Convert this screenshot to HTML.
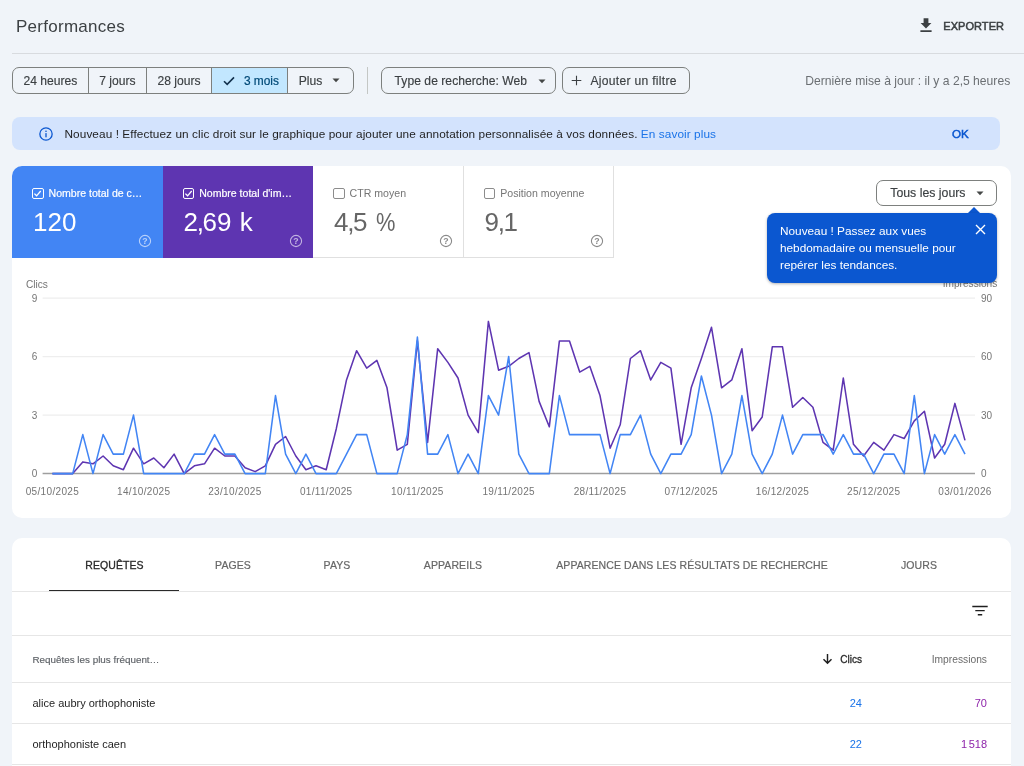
<!DOCTYPE html>
<html lang="fr"><head><meta charset="utf-8"><title>Performances</title>
<style>
*{box-sizing:border-box;margin:0;padding:0}
html,body{width:1024px;height:766px;overflow:hidden;background:#f0f4f9;font-family:"Liberation Sans",Arial,sans-serif;color:#1f1f1f}
.abs{position:absolute}
#title{left:16px;top:16.1px;font-size:17px;line-height:22px;color:#3c4043;letter-spacing:0.27px}
#export{left:943.3px;top:18px;font-size:11px;line-height:16px;color:#3c4043;letter-spacing:0.05px;-webkit-text-stroke:0.5px #3c4043}
#hr1{left:12px;top:52.5px;width:1012px;height:1px;background:#d8dbdf}
.chips{top:67px;height:26.5px;border:1px solid #7d807e;border-radius:7px;display:flex;overflow:hidden;font-size:12.1px;color:#3c4043}
.chips>div{-webkit-text-stroke:0.15px;height:100%;padding-top:0.9px;display:flex;align-items:center;justify-content:center;border-right:1px solid #7d807e;white-space:nowrap}
.chips>div:last-child{border-right:0}
.chip{-webkit-text-stroke:0.15px;top:67px;height:26.5px;padding-top:0.9px;border:1px solid #7d807e;border-radius:7px;font-size:12.1px;display:flex;align-items:center;white-space:nowrap;color:#3c4043}
#vsep{left:367px;top:67px;width:1px;height:27px;background:#c4c7c5}
#updated{right:13.8px;top:72.6px;font-size:12.13px;line-height:16px;color:#6b6f73;white-space:nowrap}
#banner{left:12px;top:116.8px;width:988px;height:33.5px;background:#d3e3fd;border-radius:8px}
#banner .t{left:52.5px;top:9.1px;font-size:11.8px;letter-spacing:0.08px;line-height:16px;color:#1f1f1f;white-space:nowrap}
#banner a{color:#1a73e8;text-decoration:none}
#banner .ok{left:940px;top:9.1px;font-size:11.6px;line-height:16px;color:#0b57d0;-webkit-text-stroke:0.5px #0b57d0}
.card{background:#fff;border-radius:12px}
#card1{left:12.4px;top:166.2px;width:998.2px;height:351.6px;border-radius:10px}
.tile{top:0;height:91.6px}
.tile .lbl{position:absolute;left:36.2px;top:19.5px;font-size:10.7px;line-height:14px;white-space:nowrap}
.tile .val{position:absolute;left:20.6px;top:39.8px;font-size:26px;line-height:32px;white-space:nowrap;word-spacing:1px}
.cm{margin:0 -1.5px 0 -1.2px}
.tile .cb{position:absolute;left:20px;top:21.9px;width:11.2px;height:11.2px;border:1.1px solid #8c8c8c;border-radius:2px}
.tile svg.q{position:absolute;left:125.9px;top:67.7px}
#t1{left:0;width:150.6px;background:#4285f4;color:#fff;border-top-left-radius:10px}
#t2{left:150.6px;width:150.4px;background:#5e35b1;color:#fff}
#t3{left:301px;width:150.6px;color:#666;border-right:1px solid #e0e0e0;border-bottom:1px solid #e0e0e0}
#t4{left:451.6px;width:150.1px;color:#666;border-right:1px solid #e0e0e0;border-bottom:1px solid #e0e0e0}
#daily{left:876px;top:179.5px;width:121px;height:26.5px;border:1px solid #7d807e;border-radius:7px;font-size:12.3px;background:#fff}
#tip{left:767px;top:213px;width:230px;height:69.8px;background:#0b57d0;border-radius:8px;color:#fff;font-size:11.8px;line-height:17.15px;box-shadow:0 1px 3px rgba(0,0,0,.3)}
#card2{left:12.4px;top:538px;width:998.2px;height:240px;border-radius:10px}
.tab{top:558px;font-size:10.5px;line-height:14px;color:#676767;-webkit-text-stroke:0.2px #676767;letter-spacing:0.08px;white-space:nowrap;transform:translateX(-50%)}
.hl{left:12.4px;width:998.2px;height:1px;background:#e6e6e6}
.cell{font-size:11px;line-height:14px;white-space:nowrap}
#wrap{position:absolute;left:0;top:0;width:1024px;height:766px;overflow:hidden;background:#f0f4f9;will-change:transform}
</style></head><body><div id="wrap">

<div class="abs" id="title">Performances</div>
<svg class="abs" style="left:919.3px;top:17.4px" width="14" height="18" viewBox="0 0 14 18"><path d="M7 11.4 L1.6 6 H4.6 V1.2 H9.4 V6 H12.4 Z M1.4 13.2 H12.6 V15 H1.4 Z" fill="#3c4043"/></svg>
<div class="abs" id="export">EXPORTER</div>
<div class="abs" id="hr1"></div>

<div class="abs chips" style="left:12px;width:342px">
  <div style="width:75.75px">24 heures</div>
  <div style="width:58.25px">7 jours</div>
  <div style="width:65px">28 jours</div>
  <div style="width:76.1px;background:#c2e7ff;color:#004a77;font-size:11.9px;-webkit-text-stroke:0.2px #004a77"><svg width="12" height="10" viewBox="0 0 12 10" style="margin-left:3.2px;margin-right:8.5px"><path d="M1 5.2 L4.2 8.4 L11 1.4" fill="none" stroke="#12314d" stroke-width="1.6"/></svg>3 mois</div>
  <div style="flex:1;padding-right:2.2px">Plus<svg width="8" height="5" viewBox="0 0 8 5" style="margin-left:9.8px"><path d="M0.5 0.5 H7.5 L4 4.2 Z" fill="#444746"/></svg></div>
</div>
<div class="abs" id="vsep"></div>
<div class="abs chip" style="left:381px;width:174.6px;padding-left:12.6px;letter-spacing:0.04px">Type de recherche: Web<svg width="8" height="5" viewBox="0 0 8 5" style="position:absolute;left:155.5px;top:10.6px"><path d="M0.5 0.5 H7.5 L4 4.2 Z" fill="#444746"/></svg></div>
<div class="abs chip" style="left:562px;width:128px;padding-left:7.9px;letter-spacing:0.3px"><svg width="11" height="11" viewBox="0 0 11 11" style="margin-right:8.5px"><path d="M5.5 0.7 V10.3 M0.7 5.5 H10.3" stroke="#3c4043" stroke-width="1.1"/></svg>Ajouter un filtre</div>
<div class="abs" id="updated">Dernière mise à jour : il y a 2,5 heures</div>

<div class="abs" id="banner">
  <svg class="abs" style="left:26.9px;top:9.9px" width="14" height="14" viewBox="0 0 14 14"><circle cx="7" cy="7" r="6.15" fill="none" stroke="#0b57d0" stroke-width="1.3"/><rect x="6.35" y="6.1" width="1.3" height="4.2" fill="#0b57d0"/><rect x="6.35" y="3.6" width="1.3" height="1.4" fill="#0b57d0"/></svg>
  <div class="abs t">Nouveau ! Effectuez un clic droit sur le graphique pour ajouter une annotation personnalisée à vos données. <a>En savoir plus</a></div>
  <div class="abs ok">OK</div>
</div>

<div class="abs card" id="card1">
  <div class="abs tile" id="t1"><span class="cb" style="border-color:#fff"><svg width="9" height="9" viewBox="0 0 9 9" style="position:absolute;left:0;top:0"><path d="M1.4 4.6 L3.6 6.8 L7.7 2" fill="none" stroke="#fff" stroke-width="1.3"/></svg></span><div class="lbl" style="-webkit-text-stroke:0.2px #fff;font-size:10.55px">Nombre total de c…</div><div class="val">120</div><svg class="q" width="14" height="14" viewBox="0 0 14 14"><circle cx="7" cy="7" r="5.6" fill="none" stroke="#fff" stroke-opacity=".62" stroke-width="1.1"/><text x="7" y="10" font-size="8.8" font-weight="bold" font-family="Liberation Sans, sans-serif" text-anchor="middle" fill="#fff" fill-opacity=".62">?</text></svg></div>
  <div class="abs tile" id="t2"><span class="cb" style="border-color:#fff"><svg width="9" height="9" viewBox="0 0 9 9" style="position:absolute;left:0;top:0"><path d="M1.4 4.6 L3.6 6.8 L7.7 2" fill="none" stroke="#fff" stroke-width="1.3"/></svg></span><div class="lbl" style="-webkit-text-stroke:0.2px #fff;font-size:10.55px">Nombre total d'im…</div><div class="val">2<span class="cm">,</span>69 k</div><svg class="q" width="14" height="14" viewBox="0 0 14 14"><circle cx="7" cy="7" r="5.6" fill="none" stroke="#fff" stroke-opacity=".62" stroke-width="1.1"/><text x="7" y="10" font-size="8.8" font-weight="bold" font-family="Liberation Sans, sans-serif" text-anchor="middle" fill="#fff" fill-opacity=".62">?</text></svg></div>
  <div class="abs tile" id="t3"><span class="cb"></span><div class="lbl" style="color:#757575;font-size:10.6px">CTR moyen</div><div class="val">4<span class="cm">,</span>5 <span style="display:inline-block;transform:scaleX(.84);transform-origin:0 50%">%</span></div><svg class="q" width="14" height="14" viewBox="0 0 14 14"><circle cx="7" cy="7" r="5.6" fill="none" stroke="#8a8a8a" stroke-opacity="1" stroke-width="1.1"/><text x="7" y="10" font-size="8.8" font-weight="bold" font-family="Liberation Sans, sans-serif" text-anchor="middle" fill="#8a8a8a" fill-opacity="1">?</text></svg></div>
  <div class="abs tile" id="t4"><span class="cb"></span><div class="lbl" style="color:#757575;font-size:10.6px">Position moyenne</div><div class="val">9<span class="cm">,</span>1</div><svg class="q" width="14" height="14" viewBox="0 0 14 14"><circle cx="7" cy="7" r="5.6" fill="none" stroke="#8a8a8a" stroke-opacity="1" stroke-width="1.1"/><text x="7" y="10" font-size="8.8" font-weight="bold" font-family="Liberation Sans, sans-serif" text-anchor="middle" fill="#8a8a8a" fill-opacity="1">?</text></svg></div>
</div>

<svg class="abs" style="left:0;top:270px" width="1024" height="240" viewBox="0 270 1024 240" font-family="Liberation Sans, sans-serif" font-size="10" fill="#757575">
  <text x="26" y="287.5" font-size="10.15">Clics</text>
  <text x="997.3" y="287.3" font-size="10.15" text-anchor="end">Impressions</text>
  <g stroke="#eeeeee" stroke-width="1.3"><line x1="42.6" x2="975" y1="298.1" y2="298.1"/><line x1="42.6" x2="975" y1="356.6" y2="356.6"/><line x1="42.6" x2="975" y1="415.1" y2="415.1"/></g>
  <line x1="42.6" x2="975" y1="473.6" y2="473.6" stroke="#9e9e9e" stroke-width="1.5"/>
  <g text-anchor="end"><text x="37.3" y="301.7">9</text><text x="37.3" y="360.2">6</text><text x="37.3" y="418.7">3</text><text x="37.3" y="477.1">0</text></g>
  <g><text x="981" y="301.7">90</text><text x="981" y="360.2">60</text><text x="981" y="418.7">30</text><text x="981" y="477.1">0</text></g>
  <g text-anchor="middle" letter-spacing="0.33"><text x="52.4" y="495">05/10/2025</text><text x="143.7" y="495">14/10/2025</text><text x="234.9" y="495">23/10/2025</text><text x="326.2" y="495">01/11/2025</text><text x="417.4" y="495">10/11/2025</text><text x="508.7" y="495">19/11/2025</text><text x="600" y="495">28/11/2025</text><text x="691.2" y="495">07/12/2025</text><text x="782.5" y="495">16/12/2025</text><text x="873.7" y="495">25/12/2025</text><text x="965" y="495">03/01/2026</text></g>
  <polyline fill="none" stroke="#5e35b1" stroke-width="1.55" stroke-linejoin="round" points="52.4,473.6 62.5,473.6 72.7,473.6 82.8,461.9 93.0,463.8 103.1,456.0 113.2,465.8 123.4,469.7 133.5,448.2 143.7,463.8 153.8,458.0 163.9,467.7 174.1,454.1 184.2,473.6 194.4,465.8 204.5,463.8 214.6,448.2 224.8,456.0 234.9,456.0 245.1,467.7 255.2,471.6 265.3,465.8 275.5,444.3 285.6,436.5 295.8,456.0 305.9,469.7 316.0,465.8 326.2,469.7 336.3,428.7 346.5,379.9 356.6,350.7 366.7,368.2 376.9,360.4 387.0,387.8 397.2,450.2 407.3,444.3 417.4,340.9 427.6,442.4 437.7,348.7 447.9,362.4 458.0,378.0 468.1,415.1 478.3,432.6 488.4,321.4 498.6,370.2 508.7,366.3 518.8,358.5 529.0,352.6 539.1,401.4 549.3,426.8 559.4,340.9 569.5,340.9 579.7,372.1 589.8,366.3 600.0,395.6 610.1,448.2 620.2,424.8 630.4,358.5 640.5,350.7 650.7,379.9 660.8,362.4 670.9,368.2 681.1,444.3 691.2,387.8 701.4,358.5 711.5,327.3 721.6,387.8 731.8,379.9 741.9,348.7 752.1,430.7 762.2,417.0 772.3,346.8 782.5,346.8 792.6,407.3 802.8,397.5 812.9,407.3 823.0,442.4 833.2,450.2 843.3,378.0 853.5,444.3 863.6,456.0 873.7,442.4 883.9,450.2 894.0,434.6 904.2,438.5 914.3,420.9 924.4,411.2 934.6,458.0 944.7,444.3 954.9,403.4 965.0,440.4"/>
  <polyline fill="none" stroke="#4285f4" stroke-width="1.55" stroke-linejoin="round" points="52.4,473.6 62.5,473.6 72.7,473.6 82.8,434.6 93.0,473.6 103.1,434.6 113.2,454.1 123.4,454.1 133.5,415.1 143.7,473.6 153.8,473.6 163.9,473.6 174.1,473.6 184.2,473.6 194.4,454.1 204.5,454.1 214.6,434.6 224.8,454.1 234.9,454.1 245.1,473.6 255.2,473.6 265.3,473.6 275.5,395.6 285.6,454.1 295.8,473.6 305.9,454.1 316.0,473.6 326.2,473.6 336.3,473.6 346.5,454.1 356.6,434.6 366.7,434.6 376.9,473.6 387.0,473.6 397.2,473.6 407.3,434.6 417.4,337.0 427.6,454.1 437.7,454.1 447.9,434.6 458.0,473.6 468.1,454.1 478.3,473.6 488.4,395.6 498.6,415.1 508.7,356.5 518.8,454.1 529.0,473.6 539.1,473.6 549.3,473.6 559.4,395.6 569.5,434.6 579.7,434.6 589.8,434.6 600.0,434.6 610.1,473.6 620.2,434.6 630.4,434.6 640.5,415.1 650.7,454.1 660.8,473.6 670.9,454.1 681.1,454.1 691.2,434.6 701.4,376.0 711.5,415.1 721.6,473.6 731.8,454.1 741.9,395.6 752.1,454.1 762.2,473.6 772.3,454.1 782.5,415.1 792.6,454.1 802.8,434.6 812.9,434.6 823.0,434.6 833.2,454.1 843.3,434.6 853.5,454.1 863.6,454.1 873.7,473.6 883.9,454.1 894.0,454.1 904.2,473.6 914.3,395.6 924.4,473.6 934.6,434.6 944.7,454.1 954.9,434.6 965.0,454.1"/>
</svg>

<div class="abs chip" id="daily" style="padding-left:13.3px">Tous les jours<svg width="8" height="5" viewBox="0 0 8 5" style="margin-left:11px"><path d="M0.5 0.5 H7.5 L4 4.2 Z" fill="#444746"/></svg></div>
<svg class="abs" style="left:966.7px;top:207px" width="14" height="7" viewBox="0 0 14 7"><path d="M0 7 L7 0 L14 7 Z" fill="#0b57d0"/></svg>
<div class="abs" id="tip"><div class="abs" style="left:13px;top:10px;white-space:nowrap">Nouveau ! Passez aux vues<br>hebdomadaire ou mensuelle pour<br>repérer les tendances.</div>
  <svg class="abs" style="left:208px;top:11.2px" width="11" height="11" viewBox="0 0 11 11"><path d="M1 1 L10 10 M10 1 L1 10" stroke="#fff" stroke-width="1.4"/></svg></div>

<div class="abs card" id="card2"></div>
<div class="abs tab" style="left:114.5px;color:#2a2a2a;-webkit-text-stroke:0.3px #2a2a2a">REQUÊTES</div>
<div class="abs tab" style="left:233px">PAGES</div>
<div class="abs tab" style="left:337px">PAYS</div>
<div class="abs tab" style="left:453px">APPAREILS</div>
<div class="abs tab" style="left:692px">APPARENCE DANS LES RÉSULTATS DE RECHERCHE</div>
<div class="abs tab" style="left:919px">JOURS</div>
<div class="abs" style="left:49px;top:589.7px;width:130px;height:1.7px;background:#2a2a2a"></div>
<div class="abs hl" style="top:590.7px"></div>
<svg class="abs" style="left:972px;top:604.6px" width="16" height="12" viewBox="0 0 16 12"><path d="M0.3 1.5 H15.7 M3.3 5.6 H12.7 M5.8 9.7 H10.2" stroke="#1f1f1f" stroke-width="1.4"/></svg>
<div class="abs hl" style="top:634.6px"></div>
<div class="abs cell" style="left:32.5px;top:652.6px;font-size:9.85px;color:#5f6368;-webkit-text-stroke:0.15px #5f6368">Requêtes les plus fréquent…</div>
<svg class="abs" style="left:822.2px;top:653.2px" width="11" height="12" viewBox="0 0 11 12"><path d="M5.5 1 V10 M1.5 6.2 L5.5 10.2 L9.5 6.2" fill="none" stroke="#1f1f1f" stroke-width="1.45"/></svg>
<div class="abs cell" style="right:162px;top:652.7px;font-size:10.1px;color:#2a2a2a;-webkit-text-stroke:0.28px #2a2a2a">Clics</div>
<div class="abs cell" style="right:37px;top:652.7px;font-size:10.25px;color:#6b6b6b">Impressions</div>
<div class="abs hl" style="top:682.3px"></div>
<div class="abs cell" style="left:32.5px;top:696px">alice aubry orthophoniste</div>
<div class="abs cell" style="right:162px;top:696px;color:#1a73e8">24</div>
<div class="abs cell" style="right:37px;top:696px;color:#8e24aa">70</div>
<div class="abs hl" style="top:723.3px"></div>
<div class="abs cell" style="left:32.5px;top:737px">orthophoniste caen</div>
<div class="abs cell" style="right:162px;top:737px;color:#1a73e8">22</div>
<div class="abs cell" style="right:37px;top:737px;color:#8e24aa">1<span style="margin-left:1.5px">518</span></div>
<div class="abs hl" style="top:764.3px"></div>
</div></body></html>
